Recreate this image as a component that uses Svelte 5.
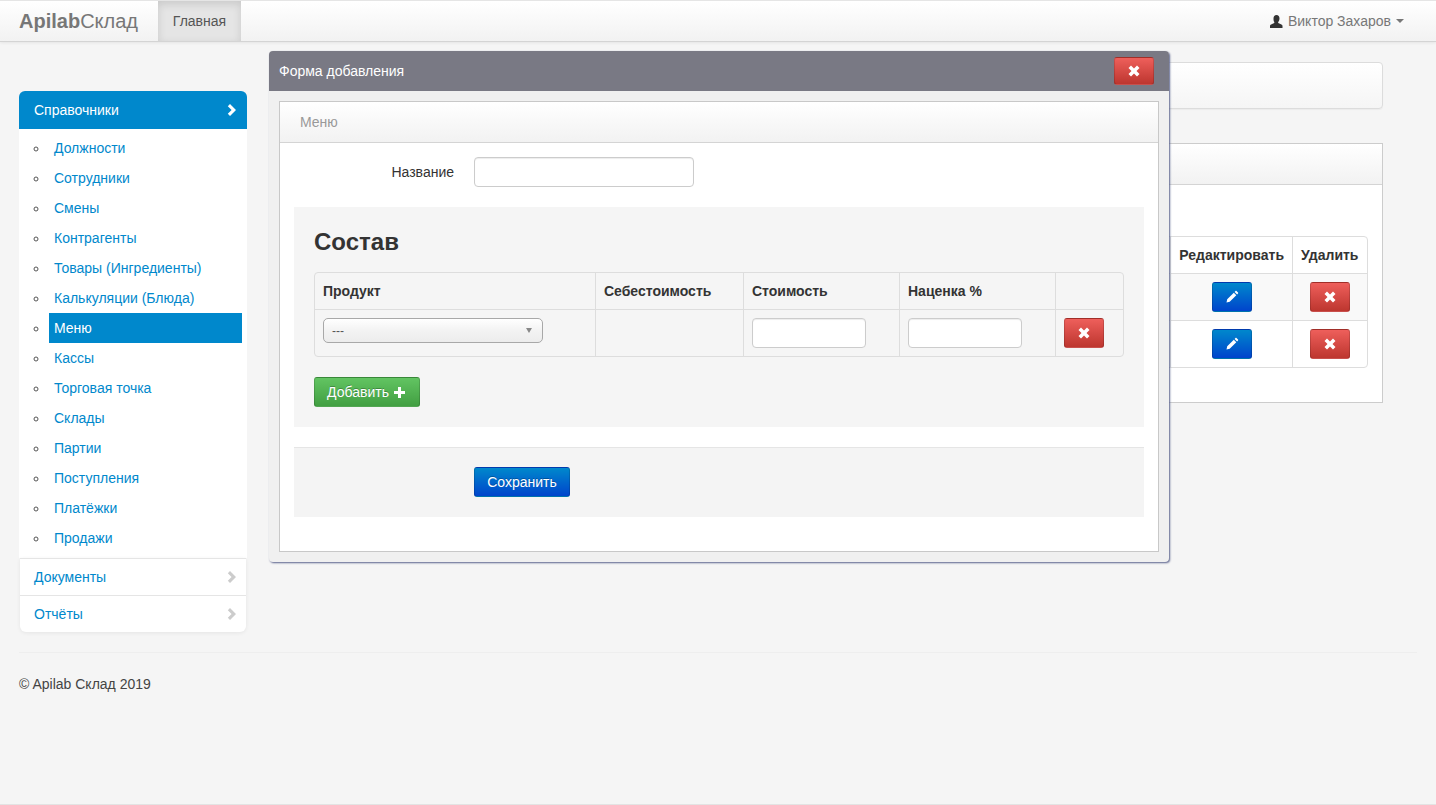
<script>
  const refs = [
    "Должности", "Сотрудники", "Смены", "Контрагенты", "Товары (Ингредиенты)",
    "Калькуляции (Блюда)", "Меню", "Кассы", "Торговая точка", "Склады",
    "Партии", "Поступления", "Платёжки", "Продажи",
  ];
</script>

{#snippet remove()}
  <svg class="ico" width="12" height="12" viewBox="0 0 12 12" aria-hidden="true">
    <path d="M3 .5l3 3 3-3L11.500 3l-3 3 3 3L9 11.500l-3-3-3 3L.5 9l3-3-3-3z" fill="#fff" />
  </svg>
{/snippet}

{#snippet pencil()}
  <svg class="ico" width="14" height="14" viewBox="0 0 14 14" aria-hidden="true">
    <path d="M1.500 12.500l.7-3.200 6.600-6.600 2.500 2.500-6.600 6.600zM9.600 1.900l.9-.9c.3-.3.7-.3 1 0l1.500 1.500c.3.3.3.7 0 1l-.9.9z" fill="#fff" />
  </svg>
{/snippet}

{#snippet chevron()}
  <svg class="chev" width="10" height="14" viewBox="0 0 10 14" aria-hidden="true">
    <path d="M3 1l6 6-6 6-2.200-2.200L4.600 7 .8 3.200z" fill="currentColor" />
  </svg>
{/snippet}

<div class="page">
  <header class="navbar">
    <div class="brand"><b>Apilab</b>Склад</div>
    <div class="nav-active">Главная</div>
    <div class="user">
      <svg width="13" height="13" viewBox="0 0 13 13" aria-hidden="true">
        <path d="M6.500 0C8.400 0 9.500 1.400 9.500 3.400c0 1.400-.6 2.800-1.400 3.600 0 .8.300 1.100 1.200 1.500 1.500.6 3 1.100 3.200 2.200V13H0v-2.300c.2-1.100 1.700-1.600 3.200-2.200.9-.4 1.200-.7 1.200-1.500C3.600 6.200 3.500 4.800 3.500 3.400 3.500 1.400 4.600 0 6.500 0z" fill="#333" />
      </svg>
      <span>Виктор Захаров</span>
      <i class="caret"></i>
    </div>
  </header>

  <div class="layout">
    <aside class="sidebar">
      <div class="side-head">Справочники {@render chevron()}</div>
      <ul class="side-list">
        {#each refs as item}
          <li><a href="#top" class:active={item === "Меню"}>{item}</a></li>
        {/each}
      </ul>
      <div class="side-rows">
        <div class="side-row">Документы {@render chevron()}</div>
        <div class="side-row">Отчёты {@render chevron()}</div>
      </div>
    </aside>

    <main class="main">
      <div class="crumbs"></div>
      <section class="panel">
        <div class="panel-head"></div>
        <div class="panel-body">
          <table class="table back">
            <thead>
              <tr><th class="fill"></th><th class="edit">Редактировать</th><th class="del">Удалить</th></tr>
            </thead>
            <tbody>
              {#each [0, 1] as row}
                <tr class:odd={row === 0}>
                  <td></td>
                  <td class="center"><button class="btn blue small">{@render pencil()}</button></td>
                  <td class="center"><button class="btn red small">{@render remove()}</button></td>
                </tr>
              {/each}
            </tbody>
          </table>
        </div>
      </section>
    </main>
  </div>

  <footer class="footer">
    <hr />
    <p>© Apilab Склад 2019</p>
  </footer>

  <div class="modal">
    <div class="modal-head">
      <span>Форма добавления</span>
      <button class="btn red small close">{@render remove()}</button>
    </div>
    <div class="modal-body">
      <div class="form-panel">
        <div class="form-title">Меню</div>
        <div class="form-row">
          <label for="name">Название</label>
          <input id="name" type="text" class="input wide" />
        </div>
        <div class="well">
          <h2>Состав</h2>
          <table class="table front">
            <thead>
              <tr>
                <th class="c1">Продукт</th>
                <th class="c2">Себестоимость</th>
                <th class="c3">Стоимость</th>
                <th class="c4">Наценка %</th>
                <th></th>
              </tr>
            </thead>
            <tbody>
              <tr>
                <td>
                  <div class="select"><span>---</span><i class="sel-arrow"></i></div>
                </td>
                <td></td>
                <td><input type="text" class="input narrow" /></td>
                <td><input type="text" class="input narrow" /></td>
                <td><button class="btn red small">{@render remove()}</button></td>
              </tr>
            </tbody>
          </table>
          <button class="btn green">
            Добавить
            <svg width="11" height="11" viewBox="0 0 11 11" aria-hidden="true">
              <path d="M4 0h3v4h4v3H7v4H4V7H0V4h4z" fill="#fff" />
            </svg>
          </button>
        </div>
        <div class="actions">
          <button class="btn blue save">Сохранить</button>
        </div>
      </div>
    </div>
  </div>
</div>

<style>
  :global(body) {
    margin: 0;
    background: #f5f5f5;
    font-family: "Liberation Sans", Arial, sans-serif;
    font-size: 14px;
    color: #333;
  }

  .page {
    position: relative;
    height: 804px;
    border-bottom: 1px solid #e3e3e3;
    overflow: hidden;
  }

  .navbar {
    display: flex;
    align-items: stretch;
    height: 40px;
    padding: 0 32px 0 19px;
    border-top: 1px solid #e5e5e5;
    border-bottom: 1px solid #d4d4d4;
    background: linear-gradient(#fff, #f2f2f2);
    box-shadow: 0 1px 3px rgba(0, 0, 0, 0.07);
    color: #777;
  }

  .brand {
    font-size: 20px;
    line-height: 40px;
    width: 139px;
  }

  .nav-active {
    width: 83px;
    line-height: 40px;
    text-align: center;
    color: #555;
    background: #e5e5e5;
    box-shadow: inset 0 3px 8px rgba(0, 0, 0, 0.125);
  }

  .user {
    margin-left: auto;
    display: flex;
    align-items: center;
    gap: 5px;
  }

  .caret {
    border-top: 4px solid #777;
    border-left: 4px solid transparent;
    border-right: 4px solid transparent;
  }

  .layout {
    display: flex;
    gap: 30px;
    padding: 20px 53px 0 19px;
  }

  .sidebar {
    width: 228px;
    flex: none;
    margin-top: 29px;
  }

  .side-head {
    display: flex;
    justify-content: space-between;
    align-items: center;
    height: 38px;
    padding: 0 10px 0 15px;
    background: #0088cc;
    color: #fff;
    border-radius: 6px 6px 0 0;
  }

  .side-list {
    margin: 0;
    padding: 4px 5px 5px 30px;
    list-style: circle;
    color: #555;
    background: #fff;
  }

  .side-list li {
    height: 30px;
  }

  .side-list a {
    display: block;
    padding: 0 5px;
    line-height: 30px;
    color: #0088cc;
    text-decoration: none;
  }

  .side-list a.active {
    background: #0088cc;
    color: #fff;
  }

  .side-rows {
    margin: 0 1px;
    background: #fff;
    border-radius: 0 0 6px 6px;
    box-shadow: 0 1px 4px rgba(0, 0, 0, 0.065);
  }

  .side-row {
    display: flex;
    justify-content: space-between;
    align-items: center;
    height: 36px;
    padding: 0 9px 0 14px;
    border-top: 1px solid #e5e5e5;
    color: #0088cc;
  }

  .chev {
    color: #ccc;
  }

  .side-head .chev {
    color: #fff;
  }

  .main {
    flex: 1;
    min-width: 0;
  }

  .crumbs {
    height: 45px;
    border: 1px solid #dcdcdc;
    border-radius: 4px;
    background: linear-gradient(#fff, #f5f5f5);
    box-shadow: 0 1px 1px rgba(0, 0, 0, 0.04);
  }

  .panel {
    margin-top: 34px;
    border: 1px solid #ccc;
    background: #fff;
  }

  .panel-head {
    height: 40px;
    border-bottom: 1px solid #d4d4d4;
    background: linear-gradient(#fff, #f2f2f2);
  }

  .panel-body {
    padding: 51px 14px 34px 15px;
  }

  .table {
    width: 100%;
    border-collapse: separate;
    border-spacing: 0;
    border: 1px solid #ddd;
    border-radius: 4px;
  }

  .table th {
    text-align: left;
    height: 36px;
    padding: 0 8px;
    font-weight: bold;
  }

  .table td {
    padding: 8px;
    border-top: 1px solid #ddd;
    vertical-align: top;
  }

  .table th + th,
  .table td + td {
    border-left: 1px solid #ddd;
  }

  .back th.edit {
    width: 104px;
  }

  .back th.del {
    width: 58px;
  }

  .back .odd td {
    background: #f9f9f9;
  }

  .center {
    text-align: center;
  }

  .btn {
    display: inline-flex;
    align-items: center;
    justify-content: center;
    gap: 5px;
    padding: 0;
    border: 1px solid rgba(0, 0, 0, 0.15);
    border-radius: 3px;
    font-family: inherit;
    font-size: 14px;
    color: #fff;
    text-shadow: 0 -1px 0 rgba(0, 0, 0, 0.25);
    height: 30px;
    box-sizing: border-box;
    vertical-align: top;
  }

  .btn.small {
    width: 40px;
  }

  .btn.close {
    height: 28px;
  }

  .blue {
    background: linear-gradient(#0088cc, #0044cc);
  }

  .red {
    background: linear-gradient(#ee5f5b, #bd362f);
  }

  .green {
    width: 106px;
    padding-right: 2px;
    background: linear-gradient(#62c462, #429f42);
    margin-top: 20px;
  }

  .save {
    width: 96px;
  }

  .modal {
    position: absolute;
    left: 269px;
    top: 51px;
    width: 900px;
    height: 511px;
    border-radius: 4px;
    background: #f0f0f0;
    box-shadow: 1px 1px 2px #5a628c;
  }

  .modal-head {
    display: flex;
    justify-content: space-between;
    align-items: center;
    height: 40px;
    padding: 0 15px 0 10px;
    background: #797984;
    color: #fff;
    font-size: 14px;
    border-radius: 4px 4px 0 0;
  }

  .modal-body {
    padding: 10px;
  }

  .form-panel {
    height: 449px;
    border: 1px solid #c8c8c8;
    background: #fff;
  }

  .form-title {
    height: 40px;
    line-height: 40px;
    padding-left: 20px;
    color: #999;
    border-bottom: 1px solid #d4d4d4;
    background: linear-gradient(#fff, #f2f2f2);
  }

  .form-row {
    display: flex;
    align-items: center;
    gap: 20px;
    padding: 14px 14px 20px;
  }

  .form-row label {
    width: 160px;
    text-align: right;
  }

  .input {
    height: 30px;
    padding: 4px 6px;
    box-sizing: border-box;
    border: 1px solid #ccc;
    border-radius: 4px;
    background: #fff;
    box-shadow: inset 0 1px 1px rgba(0, 0, 0, 0.075);
    display: block;
  }

  .wide {
    width: 220px;
  }

  .narrow {
    width: 114px;
  }

  .well {
    margin: 0 14px;
    height: 220px;
    padding: 20px;
    box-sizing: border-box;
    background: #f5f5f5;
  }

  .well h2 {
    margin: 0 0 15px;
    font-size: 24px;
    line-height: 30px;
    color: #333;
  }

  .front .c1 {
    width: 264px;
  }

  .front .c2 {
    width: 131px;
  }

  .front .c3,
  .front .c4 {
    width: 139px;
  }

  .select {
    position: relative;
    width: 220px;
    height: 25px;
    box-sizing: border-box;
    padding-left: 8px;
    border: 1px solid #a8a8a8;
    border-radius: 5px;
    background: linear-gradient(#fff, #f3f3f3 50%, #ececec);
    font-size: 12px;
    line-height: 24px;
    color: #555;
  }

  .sel-arrow {
    position: absolute;
    right: 10px;
    top: 9px;
    border-top: 5px solid #888;
    border-left: 3px solid transparent;
    border-right: 3px solid transparent;
  }

  .actions {
    margin: 20px 14px 0;
    height: 70px;
    padding: 19px 0 0 180px;
    box-sizing: border-box;
    border-top: 1px solid #e5e5e5;
    background: #f4f4f4;
  }

  .footer {
    padding: 0 19px;
  }

  .footer hr {
    margin: 20px 0 0;
    border: 0;
    border-top: 1px solid #eee;
  }

  .footer p {
    margin: 21px 0 0;
    line-height: 20px;
    color: #444;
  }
</style>
